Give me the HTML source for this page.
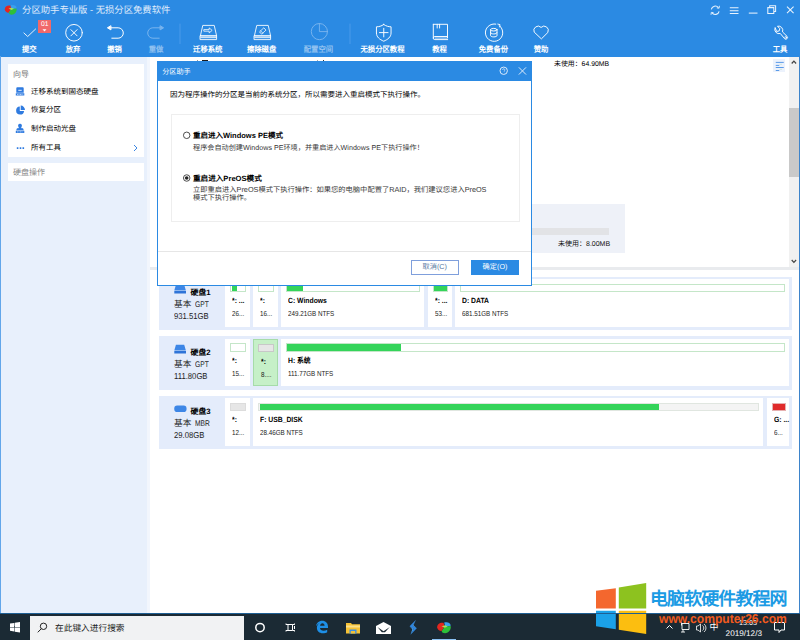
<!DOCTYPE html>
<html lang="zh-CN">
<head>
<meta charset="utf-8">
<title>分区助手专业版 - 无损分区免费软件</title>
<style>
*{box-sizing:border-box;margin:0;padding:0}
html,body{width:800px;height:640px;overflow:hidden;background:#fff}
body{font-family:"Liberation Sans",sans-serif;color:#222;position:relative;font-size:7.5px;line-height:1;text-rendering:geometricPrecision}
.abs,.abs *{position:absolute}
div,svg{position:absolute;white-space:nowrap}
/* ---------- app window ---------- */
#win{left:0;top:0;width:800px;height:614px;background:#fff;overflow:hidden}
#hdr{left:0;top:0;width:800px;height:56.500px;background:#2b8ae3}
#title{left:22.100px;top:4.300px;font-size:9.340px;line-height:13px;color:#e0edfc}
.tb{color:#fff;font-size:7.350px;line-height:10px;top:43.600px;font-weight:bold;text-align:center;width:60px;transform:scaleY(1.08);transform-origin:50% 0}
.tb.dim{color:#8fc0f0}
/* left panel */
#left{left:1px;top:57px;width:149px;height:557px;background:#e8f0fc}
.card{background:#fff;left:7px;width:136px}
.ghead{color:#777;font-size:8px;line-height:10px;left:5px}
.nav{left:22.900px;font-size:7.500px;line-height:10px;color:#000;font-weight:500}
/* main list */
#main{left:150px;top:57px;width:649px;height:557px;background:#fff}
/* dialog */
#dlg{left:157px;top:60.500px;width:375px;height:225px;background:#fff;border:1px solid #2b8ae3}
#dlgbar{left:0;top:0;width:373px;height:19px;background:#2b8ae3}
/* disks */
.row{left:159px;width:633.300px;height:53.500px;background:#e4ecfb}
.cell{background:#fff;top:2.800px;height:47.300px}
.bar{top:4.400px;left:5px;height:8.600px;border:1px solid #c4e6c8;background:#fff}
.fill{left:.400px;top:0;height:6.600px;background:#34d45a}
.pn{left:7px;top:17.800px;font-size:7.500px;line-height:8px;font-weight:bold;color:#000;transform:scaleX(.907);transform-origin:0 0}
.ps{left:7px;top:31px;font-size:7.200px;line-height:8px;color:#222;transform:scaleX(.87);transform-origin:0 0}
.dname{left:31.600px;top:11.500px;font-size:7.800px;line-height:10px;font-weight:bold;color:#000}
.dtype{left:15px;top:22.900px;font-size:8.700px;line-height:10px;color:#222}
.dtype .lat{position:static;display:inline-block;font-size:8.200px;transform:scaleX(.815);transform-origin:0 50%;margin-left:1px}
.dsize{left:15px;top:35.900px;font-size:8.600px;line-height:9px;color:#222;transform:scaleX(.895);transform-origin:0 0}
/* taskbar */
#task{left:0;top:614px;width:800px;height:26px;background:#1b2a34}
</style>
</head>
<body>
<div id="win">
  <div id="hdr">
    <div id="title">分区助手专业版 - 无损分区免费软件</div>
    <!-- app logo -->
    <svg style="left:4.400px;top:3.800px" width="13.800" height="11.800" viewBox="0 0 14 12"><path d="M7 1.300C10 .600 12.900 2 12.700 4.300L8 5.200z" fill="#3aa0ee"/><path d="M.800 5.600C.600 2.600 3.500 1 6.400 1.600L7.400 5.100 4.600 8.800C2.600 8.800 1 7.600.800 5.600z" fill="#e3271f"/><path d="M7.400 5.100L12.700 4.500C13.300 7.600 11.100 10.700 7.700 10.900 6.100 10.900 5 10.100 4.800 8.900z" fill="#2ec03a"/><path d="M4.600 4.700l3.400-1 2.100 1.200-2.600 1.100z" fill="#a6df5c"/></svg>
    <!-- window controls -->
    <svg style="left:700px;top:0" width="100" height="20" viewBox="700 0 100 20" fill="none" stroke="#e9f3fd" stroke-width="1.05">
      <path d="M711.300 9.300a4 4 0 0 1 7.100-1.600M719.100 11.300a4 4 0 0 1-7.100 1.600"/>
      <path d="M716.800 7.900l2.300.3.300-2.400M713.600 12.700l-2.300-.3-.300 2.400" stroke-width=".9"/>
      <path d="M729.800 7.800h8.700M729.800 10.650h8.700M729.800 13.500h8.700"/>
      <path d="M748.800 13.100h8.700"/>
      <path d="M767.800 7.600h6v5.800h-6zM769.700 7.600v-1.900h5.900v5.800h-1.800"/>
      <path d="M787 6.600l6.600 6.500M793.600 6.600l-6.600 6.500"/>
    </svg>
    <!-- toolbar icons -->
    <svg style="left:0;top:18px" width="800" height="26" viewBox="0 18 800 26" fill="none" stroke="#fff" stroke-width="1" stroke-linecap="round" stroke-linejoin="round">
      <!-- commit check -->
      <path d="M23.900 33l3.800 3.500 7.900-7.500" stroke-width=".95" opacity=".92"/>
      <!-- discard -->
      <circle cx="74" cy="32.750" r="8.300" stroke-width=".95"/><path d="M70.900 29.650l6.200 6.200M77.100 29.650l-6.200 6.200" stroke-width=".95"/>
      <!-- undo -->
      <path d="M109.500 27.800h8.600a5.200 5.200 0 0 1 0 10.400h-6.300"/><path d="M110.600 25.900l-3.200 1.900 3.200 1.900z" fill="#fff"/>
      <!-- redo (dim) -->
      <g stroke="#79b4ee"><path d="M161.500 27.800h-8.600a5.200 5.200 0 0 0 0 10.400h6.300"/><path d="M160.400 25.900l3.200 1.900-3.200 1.900z" fill="#79b4ee"/></g>
      <!-- separators -->
      <path d="M180 24v24M350 24v24" stroke="#4a9aea" stroke-width="1"/>
      <!-- migrate OS -->
      <g stroke-width=".9" transform="translate(208.500 0) scale(.94 1) translate(-208.600 0)"><path d="M200 35.700l2.500-10.300h12.200l2.500 10.300zM200 35.700h17.200v3.900h-17.200zM200.300 37.650h16.600"/><path d="M204 29.600h5.300v-1.700l3.200 2.500-3.200 2.500v-1.700h-5.300z" stroke-width=".8"/></g>
      <!-- wipe disk -->
      <g stroke-width=".9" transform="translate(262.500 0) scale(.94 1) translate(-262.600 0)"><path d="M254 35.700l2.500-10.300h12.200l2.500 10.300zM254 35.700h17.200v3.900h-17.200zM254.300 37.650h16.600"/><path d="M259.700 31.600l4.300-3.800 2.300 2.300-4.300 3.800z" stroke-width=".8"/><path d="M260.600 30.800l2.300 2.300" stroke-width=".7"/></g>
      <!-- allocate (dim) -->
      <g stroke="#79b4ee" stroke-width=".95"><circle cx="319.400" cy="31.600" r="8.100"/><path d="M319.400 23.500v8.100h8.100"/></g>
      <!-- shield -->
      <path d="M383.750 24.500c2.400 1.700 4.900 2.300 7.300 2.300v6.200c0 4-3.200 6.500-7.300 8.200-4.100-1.700-7.300-4.200-7.300-8.200v-6.200c2.400 0 4.900-.6 7.300-2.300z" stroke-width=".95"/><path d="M383.750 28.300v8.600M379.450 32.600h8.600" stroke-width=".95"/>
      <!-- book -->
      <g stroke-width=".95"><path d="M433.300 24.300h14.200v12.200h-12.700a1.500 1.500 0 0 0 0 3.100h12.900M433.300 24.300v13.800M437.200 24.300v3.700M439.600 24.300v3.700M447.500 36.500v1.200"/><path d="M435 38.050h12.500" stroke-width=".7"/></g>
      <!-- backup -->
      <g stroke-width=".95"><path d="M499.500 25.800a8.700 8.700 0 1 1-3.700-1.700"/><path d="M497.800 24.100l2.200.5-.3 2.300" stroke-width=".9"/><ellipse cx="493.800" cy="29.700" rx="3.200" ry="1.300"/><path d="M490.600 29.700v5.900c0 .7 1.400 1.300 3.200 1.300s3.200-.6 3.200-1.300v-5.900M490.600 32.650c0 .7 1.400 1.300 3.200 1.300s3.200-.6 3.200-1.300"/></g>
      <!-- heart -->
      <path d="M541.100 38.600l-6.900-6.500a4.250 4.250 0 0 1 6.900-4.700 4.250 4.250 0 0 1 6.900 4.700z" stroke-width=".95"/>
      <!-- wrench -->
      <g transform="translate(-1 1.700)"><path d="M776 26.200a4.300 4.300 0 0 0 5.300 5.600l4.300 5.200a1.700 1.700 0 0 0 2.500-2.300l-4.600-4.500a4.300 4.300 0 0 0-5-5.700l2.300 2.500-.6 2.200-2.200.5z" stroke-width=".95"/><circle cx="786.700" cy="35.700" r=".9" stroke-width=".7"/></g>
    </svg>
    <!-- badge -->
    <div style="left:38.100px;top:20px;width:13.200px;height:12.700px;background:#f1696a"></div>
    <div style="left:38.100px;top:21.300px;width:13.200px;text-align:center;color:#fff;font-size:6.800px;line-height:7px">01</div>
    <svg style="left:42.300px;top:29px" width="5" height="3" viewBox="0 0 5 3"><path d="M.5 .3h4L2.500 2.600z" fill="#fff"/></svg>
    <!-- labels -->
    <div class="tb" style="left:-0.75px">提交</div>
    <div class="tb" style="left:43.00px">放弃</div>
    <div class="tb" style="left:84.50px">撤销</div>
    <div class="tb dim" style="left:126.00px">重做</div>
    <div class="tb" style="left:177.75px">迁移系统</div>
    <div class="tb" style="left:231.60px">擦除磁盘</div>
    <div class="tb dim" style="left:288.40px">配置空间</div>
    <div class="tb" style="left:352.50px">无损分区教程</div>
    <div class="tb" style="left:409.60px">教程</div>
    <div class="tb" style="left:463.40px">免费备份</div>
    <div class="tb" style="left:511.00px">赞助</div>
    <div class="tb" style="left:750.10px">工具</div>
  </div>
  <div style="left:0;top:56px;width:1px;height:558px;background:#62a6ea"></div>
  <div style="left:798.500px;top:56px;width:1.500px;height:558px;background:#3d84cb;z-index:3"></div>
  <div style="left:0;top:613.300px;width:800px;height:1px;background:#1f5f93;z-index:3"></div>
  <div id="left">
    <div class="card" style="top:7px;height:93px">
      <div class="ghead" style="top:5.500px">向导</div>
      <!-- icons -->
      <svg style="left:0;top:0" width="30" height="93" viewBox="8 64 30 93">
        <g fill="#2f7be0">
          <path d="M16.300 88.300a1 1 0 0 1 1-1h5.400a1 1 0 0 1 1 1v4.500h-7.400zM15.800 93.300h8.500v2.300h-8.500z"/>
          <path d="M19.800 106.600a4 4 0 1 0 4.300 4.300h-4.300zM20.700 105.600v4.400h4.300a4.300 4.300 0 0 0-4.300-4.400z"/>
          <path d="M20 123.800a1.900 1.900 0 0 1 1.200 3.400l.3 1h1.500l.8 2h-7.600l.8-2h1.500l.3-1a1.900 1.900 0 0 1 1.200-3.400zM15.800 130.700h8.500v2.400h-8.500z"/>
          <path d="M16.800 147.300h1.600v1.600h-1.600zM19.700 147.300h1.600v1.600h-1.600zM22.500 147.300h1.600v1.600h-1.600z"/>
        </g>
        <path d="M18.300 90.300h3.400" stroke="#fff" stroke-width=".9"/>
        <path d="M17 94.500h6.200M17 131.900h6.200" stroke="#fff" stroke-width=".6" stroke-dasharray="1 .5"/>
      </svg>
      <div class="nav" style="top:22.500px">迁移系统到固态硬盘</div>
      <div class="nav" style="top:41.200px">恢复分区</div>
      <div class="nav" style="top:59.900px">制作启动光盘</div>
      <div class="nav" style="top:78.600px">所有工具</div>
      <svg style="left:124.500px;top:80px" width="5" height="8" viewBox="0 0 5 8"><path d="M1 1l3 3-3 3" fill="none" stroke="#3b86e2" stroke-width="1"/></svg>
    </div>
    <div class="card" style="top:106px;height:18px">
      <div class="ghead" style="top:4.500px;color:#888">硬盘操作</div>
    </div>
  </div>
  <div style="left:146.500px;top:56.500px;width:3.500px;height:557px;background:#f2f6fd"></div>
  <div id="main">
    <!-- behind-dialog list fragments -->
    <div style="left:404px;top:2.500px;font-size:6.900px;line-height:9px;color:#000">未使用：64.90MB</div>
    <div style="left:382px;top:146.500px;width:92.500px;height:49.500px;background:#eef1f8"></div>
    <div style="left:382px;top:170.500px;width:77px;height:7.500px;background:#e2e3e6"></div>
    <div style="left:408px;top:182.500px;font-size:7px;line-height:9px;color:#111">未使用：8.00MB</div>
    <!-- list-view toggle icon -->
    <div style="left:623.250px;top:2px;width:11.750px;height:13px;background:#ecf2fc"></div>
    <svg style="left:623.250px;top:2px" width="12" height="13" viewBox="0 0 12 13"><path d="M2.750 3.400h8M2.750 6.400h3.500M2.750 8.500h8M2.750 11.500h3.500" stroke="#5a9ae8" stroke-width="1" fill="none"/><path d="M6.500 5.300h2.500M6.500 10.400h2.500" stroke="#bfe0c8" stroke-width=".6" fill="none"/></svg>
    <div style="left:52px;top:2.800px;width:5.500px;height:1px;background:#1a1a1a"></div>
    <div style="left:46.500px;top:2.800px;width:1.500px;height:1px;background:#999"></div>
    <div style="left:173px;top:2.800px;width:1.200px;height:1px;background:#333"></div>
    <div style="left:167px;top:2.800px;width:1px;height:1px;background:#aaa"></div>
    <!-- scrollbar -->
    <div style="left:639px;top:0;width:9.500px;height:210px;background:#f1f1f1"></div>
    <div style="left:639px;top:51px;width:9.500px;height:68.500px;background:#c9c9c9"></div>
    <svg style="left:639px;top:0" width="10" height="210" viewBox="0 0 10 210"><path d="M2.700 6.500l2.200-2.400 2.200 2.400M2.700 203l2.200 2.400 2.200-2.400" stroke="#444" stroke-width="1.200" fill="none"/></svg>
    <!-- splitter -->
    <div style="left:0;top:210px;width:649px;height:3px;background:#e9ebee"></div>
  </div>
  <!-- disk map -->
  <div id="disks" style="left:0;top:0">
    <div class="row" style="top:276.500px">
      <svg style="left:14.800px;top:7.900px" width="12.600" height="10.500" viewBox="0 0 13 10"><path d="M2 0.300h8.500l1.800 6h-12z" fill="#3d86e6"/><path d="M0.300 6.800h12.200v2.600h-12.200z" fill="#2f74d8"/></svg><div class="dname">硬盘1</div><div class="dtype">基本 <span class="lat">GPT</span></div><div class="dsize">931.51GB</div>
      <div class="cell" style="left:66.2px;width:24.9px"><div class="bar" style="width:15.8px"><div class="fill" style="width:5.3px"></div></div><div class="pn">*: ...</div><div class="ps">26...</div></div>
      <div class="cell" style="left:94.2px;width:24.6px"><div class="bar" style="width:15.8px"></div><div class="pn">*:</div><div class="ps">16...</div></div>
      <div class="cell" style="left:122px;width:143px"><div class="bar" style="width:133.5px"><div class="fill" style="width:15.5px"></div></div><div class="pn">C: Windows</div><div class="ps">249.21GB NTFS</div></div>
      <div class="cell" style="left:268.7px;width:24.3px"><div class="bar" style="width:15.8px"><div class="fill" style="width:13.4px"></div></div><div class="pn">*: ...</div><div class="ps">53...</div></div>
      <div class="cell" style="left:296px;width:334px"><div class="bar" style="width:324.5px"></div><div class="pn">D: DATA</div><div class="ps">681.51GB NTFS</div></div>
    </div>
    <div class="row" style="top:336px">
      <svg style="left:14.800px;top:7.900px" width="12.600" height="10.500" viewBox="0 0 13 10"><path d="M2 0.300h8.500l1.800 6h-12z" fill="#3d86e6"/><path d="M0.300 6.800h12.200v2.600h-12.200z" fill="#2f74d8"/></svg><div class="dname">硬盘2</div><div class="dtype">基本 <span class="lat">GPT</span></div><div class="dsize">111.80GB</div>
      <div class="cell" style="left:66.2px;width:24.9px"><div class="bar" style="width:15.8px"></div><div class="pn">*:</div><div class="ps">15...</div></div>
      <div class="cell" style="left:94.2px;width:25.2px;background:#c6f0c8;border:1px solid #a6dca9"><div class="bar" style="width:15.8px;background:#e6e6e6;border-color:#c8c8c8;left:4px;top:4px"></div><div class="pn">*:</div><div class="ps">8....</div></div>
      <div class="cell" style="left:122px;width:508px"><div class="bar" style="width:498.5px"><div class="fill" style="width:114px"></div></div><div class="pn">H: 系统</div><div class="ps">111.77GB NTFS</div></div>
    </div>
    <div class="row" style="top:395.500px">
      <svg style="left:14.600px;top:9.300px" width="13" height="8" viewBox="0 0 13 8"><rect x=".3" y=".5" width="12.200" height="6.500" rx="2.800" fill="#3d86e6"/></svg><div class="dname">硬盘3</div><div class="dtype">基本 <span class="lat">MBR</span></div><div class="dsize">29.08GB</div>
      <div class="cell" style="left:66.2px;width:24.9px"><div class="bar" style="width:15.8px;background:#e6e6e6;border-color:#dcdcdc"></div><div class="pn">*:</div><div class="ps">12...</div></div>
      <div class="cell" style="left:94.2px;width:509.8px"><div class="bar" style="width:500.5px;background:#f4f4f4;border-color:#e0e6e0"><div class="fill" style="width:399px"></div></div><div class="pn">F: USB_DISK</div><div class="ps">28.46GB NTFS</div></div>
      <div class="cell" style="left:607.5px;width:22.5px"><div class="bar" style="width:14.6px;border-color:#e6b0b0"><div class="fill" style="width:12.6px;background:#e02b2b"></div></div><div class="pn">G: ...</div><div class="ps">6...</div></div>
    </div>
  </div>
  <div id="dlg">
    <div id="dlgbar"></div>
    <div style="left:4.200px;top:5px;font-size:7.150px;line-height:10px;color:#fff">分区助手</div>
    <svg style="left:338.300px;top:2px" width="34" height="14" viewBox="0 0 34 14" fill="none" stroke="#dcebfb" stroke-width="1">
      <circle cx="7.700" cy="6.750" r="3.700"/><path d="M6.600 5.900a1.100 1.100 0 1 1 1.600 1v.7M8.200 8.900v.1" stroke-width=".8"/>
      <path d="M22.850 3.350l7.200 7.200M30.050 3.350l-7.200 7.200"/>
    </svg>
    <div style="left:12px;top:28px;font-size:7.500px;line-height:10px;color:#000">因为程序操作的分区是当前的系统分区，所以需要进入重启模式下执行操作。</div>
    <!-- option group -->
    <div style="left:12.500px;top:52.500px;width:349px;height:107.500px;border:1px solid #eeeeee;background:#fff"></div>
    <svg style="left:24px;top:67.500px" width="10" height="56" viewBox="0 0 10 56">
      <circle cx="4.700" cy="6.300" r="3.250" fill="#fff" stroke="#3a3a3a" stroke-width=".9"/>
      <circle cx="4.700" cy="49" r="3.250" fill="#fff" stroke="#3a3a3a" stroke-width=".9"/>
      <circle cx="4.700" cy="49" r="1.800" fill="#222"/>
    </svg>
    <div style="left:35px;top:69.400px;font-size:7.500px;line-height:10px;font-weight:bold;color:#000">重启进入Windows PE模式</div>
    <div style="left:35px;top:81px;font-size:7.150px;line-height:10px;color:#383838">程序会自动创建Windows PE环境，并重启进入Windows PE下执行操作！</div>
    <div style="left:35px;top:112px;font-size:7.600px;line-height:10px;font-weight:bold;color:#000">重启进入PreOS模式</div>
    <div style="left:35px;top:124px;font-size:7.270px;line-height:8.300px;color:#383838;white-space:normal;width:300px">立即重启进入PreOS模式下执行操作：如果您的电脑中配置了RAID，我们建议您进入PreOS<br>模式下执行操作。</div>
    <!-- footer -->
    <div style="left:0;top:189.500px;width:373px;height:1px;background:#e6e6e6"></div>
    <div style="left:252.800px;top:198.600px;width:47.800px;height:14.500px;border:1px solid #7f9fdc;background:#fff;color:#56779f;font-size:7.200px;line-height:12.500px;text-align:center">取消(C)</div>
    <div style="left:313px;top:198.600px;width:48px;height:14.500px;background:#2b8ae3;color:#fff;font-size:7.200px;line-height:14.500px;text-align:center">确定(O)</div>
  </div>
</div>
<div id="task">
  <!-- start -->
  <svg style="left:9.800px;top:8.300px" width="10.500" height="10.500" viewBox="0 0 12 12" fill="#fff"><path d="M0 1.700l4.900-.7v4.600h-4.900zM5.500.9l6.500-.9v5.600h-6.500zM0 6.200h4.900v4.600l-4.900-.7zM5.500 6.200h6.500v5.800l-6.500-.9z"/></svg>
  <!-- search -->
  <div style="left:30px;top:1.500px;width:214px;height:24.500px;background:#f1f2f3"></div>
  <svg style="left:37px;top:8px" width="11" height="11" viewBox="0 0 11 11" fill="none" stroke="#222" stroke-width="1"><circle cx="6.500" cy="4.300" r="3.200"/><path d="M4.300 6.700l-3.500 3.600"/></svg>
  <div style="left:55px;top:9px;font-size:8.700px;line-height:11px;color:#222">在此键入进行搜索</div>
  <!-- cortana / task view -->
  <svg style="left:250px;top:5px" width="60" height="18" viewBox="0 0 60 18" fill="none" stroke="#fff"><circle cx="10" cy="8.600" r="4.200" stroke-width="1.500"/><path d="M38 5.500h4.500v6h-4.500zM36 4.500v1.200M36 11.300v1.200M44.500 4.500v1.200M44.500 7v3M44.500 11.300v1.200M36 5.500h2M36 11.500h2M42.500 5.500h2M42.500 11.500h2" stroke-width="1"/></svg>
  <!-- edge -->
  <svg style="left:315px;top:6px" width="14" height="14" viewBox="0 0 14 14"><path d="M1 6.300c.4-3.200 2.800-5.600 6.200-5.600 3.500 0 5.800 2.400 5.800 6.100v1.200h-8c.1 1.800 1.600 2.700 3.500 2.700 1.400 0 2.700-.4 3.700-1v2.600c-1.100.7-2.600 1-4.300 1-3.700 0-6-2.200-6-5.500 0-2.300 1.300-4.200 3.300-5-1.500.6-3 1.800-4.200 3.500zm4.100-.5h4.500c0-1.500-.9-2.500-2.200-2.500-1.200 0-2.100 1-2.300 2.500z" fill="#1e8fe6"/></svg>
  <!-- explorer -->
  <svg style="left:345.500px;top:7.500px" width="14" height="12" viewBox="0 0 14 12"><path d="M0 1h5l1 1.200h8v9.300h-14z" fill="#f6c235"/><path d="M0 3.500h14v2h-14z" fill="#fbe08a"/><path d="M3.500 7.500h7v4h-7z" fill="#3b8fe3"/><path d="M4.800 9h4.400v2.500h-4.400z" fill="#f6c235"/></svg>
  <!-- mail -->
  <svg style="left:376px;top:7.500px" width="15" height="12" viewBox="0 0 15 12"><path d="M7.500 0l7.500 4v8h-15v-8z" fill="#fff"/><path d="M1.500 5l6 4.200 6.300-4.200-4.800 5.200h-3.200z" fill="#1b2a34"/></svg>
  <!-- blue app -->
  <svg style="left:408px;top:5px" width="11" height="17" viewBox="0 0 11 17"><path d="M8 .8L1.600 7.300 5.800 10 2.500 15.800 8.800 9.300 4.800 6.800z" fill="#2f86e0"/><path d="M8 .8L4.800 6.800 8.800 9.300 5.400 6.300z" fill="#62b6f8"/><path d="M1.600 7.300L5.800 10 2.500 15.800 4.300 10.300z" fill="#4aa4f2"/></svg>
  <!-- partition assistant -->
  <svg style="left:436px;top:6.800px" width="16.400" height="13.600" viewBox="0 0 14 12"><path d="M7 1.300C10 .600 12.900 2 12.700 4.300L8 5.200z" fill="#3aa0ee"/><path d="M.800 5.600C.600 2.600 3.500 1 6.400 1.600L7.400 5.100 4.600 8.800C2.600 8.800 1 7.600.800 5.600z" fill="#e3271f"/><path d="M7.400 5.100L12.700 4.500C13.300 7.600 11.100 10.700 7.700 10.900 6.100 10.900 5 10.100 4.800 8.900z" fill="#2ec03a"/><path d="M4.600 4.700l3.400-1 2.100 1.200-2.600 1.100z" fill="#a6df5c"/></svg>
  <div style="left:432px;top:24.600px;width:24px;height:1.400px;background:#8cc3f5"></div>
  <!-- tray -->
  <svg style="left:664px;top:6px" width="60" height="16" viewBox="0 0 60 16" fill="none" stroke="#fff" stroke-width="1"><path d="M2.500 8.500l3-3 3 3"/><path d="M18 3.500h7v6h-7zM17 12h4M19 9.500v2.500M17.500 5.500v-3" stroke-width=".9"/><path d="M32.500 6h1.500l2.500-2v8l-2.500-2h-1.500zM38.500 5.500a3 3 0 0 1 0 5M40 4a5 5 0 0 1 0 8" stroke-width=".8"/></svg>
  <div style="left:709.500px;top:7.500px;font-size:9px;line-height:11px;color:#fff">中</div>
  <div style="left:731px;top:3.500px;width:34px;text-align:center;font-size:7.200px;line-height:9px;color:#fff">13:03</div>
  <div style="left:723.800px;top:15.300px;width:40px;text-align:center;font-size:8.200px;line-height:9px;color:#fff">2019/12/3</div>
  <svg style="left:773px;top:7px" width="13" height="13" viewBox="0 0 13 13" fill="none" stroke="#fff" stroke-width="1"><path d="M1.500 1.500h10v7.500h-3.500l-2 2.500v-2.500h-4.500z"/></svg>
</div>
<!-- watermark -->
<div id="wm" style="left:0;top:0">
  <svg style="left:594px;top:580px" width="56" height="58" viewBox="594 580 56 58">
    <path d="M596 590.800l19.800-2.600v20.300h-19.800z" fill="#f4672e"/>
    <path d="M618.800 587.600l27.400-4.600v25.500h-27.400z" fill="#8dc21f"/>
    <path d="M596 610.700h19.800v18.600l-19.800-3z" fill="#1ba1e8"/>
    <path d="M618.800 610.700h27.400v23.400l-27.400-4.300z" fill="#fcbe10"/>
  </svg>
  <div style="left:650px;top:587px;font-size:18px;line-height:24px;font-weight:bold;color:#1c9be4;letter-spacing:-.920px">电脑软硬件教程网</div>
  <div style="left:658.800px;top:611.300px;font-size:12.800px;line-height:16px;font-weight:bold;color:#f05a1e;transform:scaleX(.944);transform-origin:0 0">www.computer26.com</div>
</div>
</body>
</html>
